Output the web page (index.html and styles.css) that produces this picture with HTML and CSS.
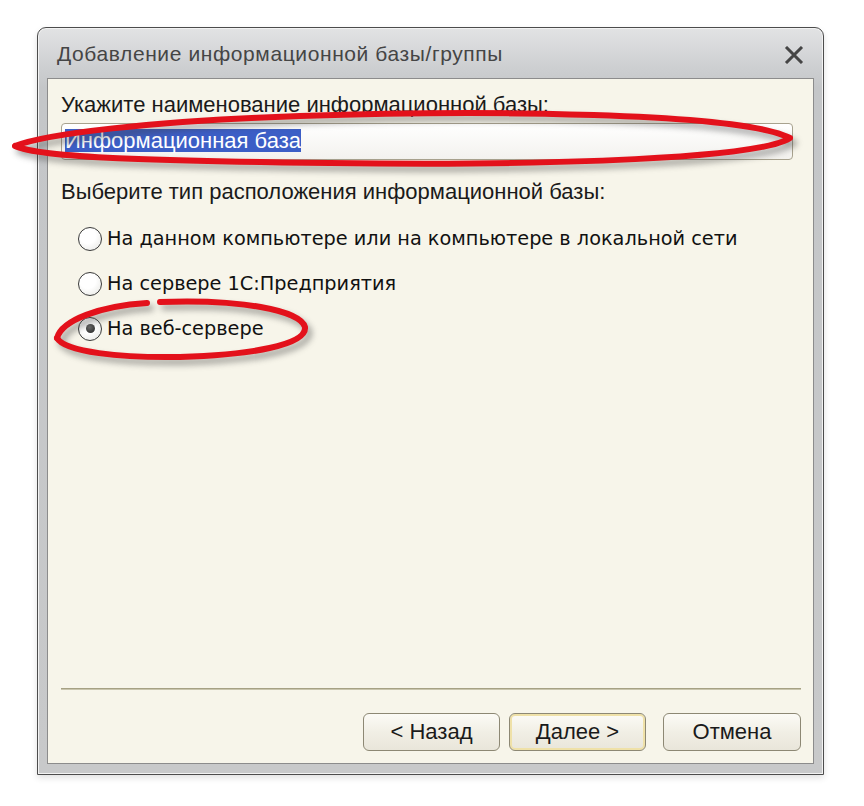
FILE: index.html
```html
<!DOCTYPE html>
<html lang="ru">

<head>
    <meta charset="UTF-8">
    <title>Добавление информационной базы/группы</title>
    <link rel="stylesheet" href="styles.css">
</head>

<body>
    <div class="window">
        <div class="titlebar">
            <span class="title">Добавление информационной базы/группы</span>
            <!-- кнопка закрытия окна -->
            <svg class="close" width="20" height="18" viewBox="0 0 20 18">
                <path d="M2 1 L18 17 M18 1 L2 17" stroke="#454545" stroke-width="3" fill="none" />
            </svg>
        </div>
        <div class="client">
            <div class="label">Укажите наименование информационной базы:</div>
            <div class="textbox"><span class="selected">Информационная база</span></div>
            <div class="label label-type">Выберите тип расположения информационной базы:</div>
            <div class="radio-list">
                <div class="radio"><span class="circle"></span>На данном компьютере или на компьютере в локальной сети</div>
                <div class="radio"><span class="circle"></span>На сервере 1С:Предприятия</div>
                <div class="radio"><span class="circle checked"></span>На веб-сервере</div>
            </div>
            <div class="spacer"></div>
            <div class="separator"></div>
            <div class="buttons">
                <button class="btn">&lt; Назад</button>
                <button class="btn btn-default">Далее &gt;</button>
                <button class="btn btn-cancel">Отмена</button>
            </div>
        </div>
    </div>

    <!-- красные пометки поверх окна -->
    <svg class="marks" width="864" height="806" viewBox="0 0 864 806">
        <g fill="none" stroke="#e3111b" stroke-width="6" stroke-linecap="round" stroke-linejoin="round">
            <path d="M15 146 C45 134, 150 121, 300 116 C480 110, 740 112, 790 138 C760 158, 560 166, 330 163 C160 161, 40 158, 15 146" />
            <path d="M57 338 C62 320, 100 306, 147 303" />
            <path d="M160 302 C240 299, 300 310, 305 327 C307 345, 250 355, 180 357 C120 358, 65 352, 57 338" />
        </g>
    </svg>
</body>

</html>
```

FILE: styles.css
```css
/* страница */
html,
body {
    margin: 0;
    padding: 0;
    background: #ffffff;
}

body {
    width: 864px;
    height: 806px;
    position: relative;
    overflow: hidden;
    font-family: "Liberation Sans", Arial, sans-serif;
}

/* рамка окна */
.window {
    margin: 27px 0 0 37px;
    width: 787px;
    height: 748px;
    box-sizing: border-box;
    border: 1px solid #4c4c4c;
    border-radius: 9px 9px 0 0;
    background: linear-gradient(#e2e3e4, #cdcfd1 40px, #c4c6c8 60px, #c8c9ca);
    box-shadow: inset 0 0 0 1px #f2f2f2, 0 3px 6px rgba(0, 0, 0, 0.12);
    padding: 0 9px 10px 9px;
    display: flex;
    flex-direction: column;
}

/* заголовок */
.titlebar {
    height: 50px;
    display: flex;
    align-items: center;
    justify-content: space-between;
    padding: 2px 10px 0 10px;
    box-sizing: border-box;
}

.title {
    font-size: 21px;
    color: #454545;
    letter-spacing: 0.6px;
}

.close {
    display: block;
    margin-top: 2px;
}

/* рабочая область */
.client {
    flex: 1;
    background: #f7f5ea;
    border: 1px solid #8c8c8c;
    padding: 13px 12px 12px 13px;
    display: flex;
    flex-direction: column;
}

.label {
    font-size: 22px;
    line-height: 26px;
    color: #1a1a1a;
}

.label-type {
    margin-top: 19px;
}

/* поле ввода */
.textbox {
    margin: 5px 8px 0 0;
    height: 37px;
    box-sizing: border-box;
    border: 1px solid #a8a28e;
    border-radius: 4px;
    background: linear-gradient(#ffffff, #f3f2ee);
    padding: 5px 3px 0 3px;
}

.selected {
    display: inline-block;
    background: #3c5ec6;
    color: #ffffff;
    font-size: 22px;
    line-height: 23px;
}

/* переключатели */
.radio-list {
    margin-top: 11px;
    display: flex;
    flex-direction: column;
}

.radio {
    height: 45px;
    display: flex;
    align-items: center;
    font-family: "DejaVu Sans", sans-serif;
    font-size: 19.3px;
    color: #111111;
    padding-left: 17px;
}

.circle {
    width: 24px;
    height: 24px;
    box-sizing: border-box;
    border: 1.5px solid #3a3a3a;
    border-radius: 50%;
    background: radial-gradient(circle at 40% 35%, #ffffff 40%, #e4e4e0);
    margin-right: 5px;
    display: flex;
    align-items: center;
    justify-content: center;
    flex-shrink: 0;
}

.circle.checked::after {
    content: "";
    width: 9px;
    height: 9px;
    border-radius: 50%;
    background: radial-gradient(circle at 40% 35%, #6a6a6a, #222222);
}

.spacer {
    flex: 1;
}

/* разделитель над кнопками */
.separator {
    border-top: 1px solid #a6a184;
    border-bottom: 1px solid #c9c5ad;
    margin-bottom: 23px;
}

/* кнопки */
.buttons {
    display: flex;
    justify-content: flex-end;
}

.btn {
    width: 137px;
    height: 38px;
    margin-left: 9px;
    border: 1px solid #8d8874;
    border-radius: 6px;
    background: linear-gradient(#fcfbf6, #f1efe5 50%, #e9e6da);
    font-family: "Liberation Sans", Arial, sans-serif;
    font-size: 22px;
    color: #1a1a1a;
    padding: 0;
}

.btn-default {
    box-shadow: inset 0 0 0 2px #efe1a8;
}

.btn-cancel {
    margin-left: 17px;
    width: 138px;
}

/* пометки */
.marks {
    position: absolute;
    left: 0;
    top: 0;
    pointer-events: none;
    filter: drop-shadow(4px 5px 3px rgba(60, 60, 60, 0.45));
}
```
